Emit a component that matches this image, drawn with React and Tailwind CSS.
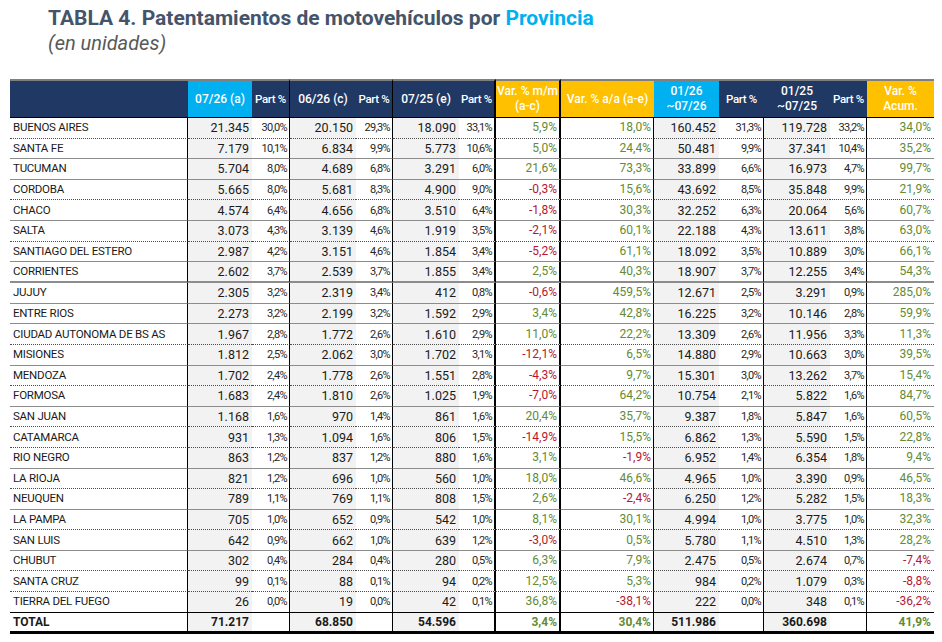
import React from 'react';

const cols = [
  { w: 'w-[178px]', type: 'name', cell: 'text-left pl-[3px] border-r border-r-black', head: 'bg-[#203864]' },
  { w: 'w-[64px]', type: 'num', cell: 'bg-[#f2f2f2] text-right pr-[3px]', head: 'bg-[#00b0f0]' },
  { w: 'w-[38px]', type: 'pct', cell: 'text-right pr-[2px] border-r border-r-black', head: 'bg-[#203864] border-r border-r-black' },
  { w: 'w-[66px]', type: 'num', cell: 'bg-[#f2f2f2] text-right pr-[3px]', head: 'bg-[#203864]' },
  { w: 'w-[37px]', type: 'pct', cell: 'text-right pr-[2px] border-r border-r-black', head: 'bg-[#203864] border-r border-r-black' },
  { w: 'w-[66px]', type: 'num', cell: 'bg-[#f2f2f2] text-right pr-[3px]', head: 'bg-[#203864]' },
  { w: 'w-[37px]', type: 'pct', cell: 'text-right pr-[2px] border-r-2 border-r-black', head: 'bg-[#203864] border-r-2 border-r-black' },
  { w: 'w-[65px]', type: 'var', cell: 'text-right pr-[2px] border-r-2 border-r-black', head: 'bg-[#ffc000] border-r-2 border-r-black' },
  { w: 'w-[93px]', type: 'var', cell: 'text-right pr-[2px] border-r border-r-black', head: 'bg-[#ffc000]' },
  { w: 'w-[65px]', type: 'num', cell: 'bg-[#f2f2f2] text-right pr-[3px]', head: 'bg-[#00b0f0]' },
  { w: 'w-[45px]', type: 'pct', cell: 'text-right pr-[2px] border-r border-r-black', head: 'bg-[#203864]' },
  { w: 'w-[66px]', type: 'num', cell: 'bg-[#f2f2f2] text-right pr-[3px]', head: 'bg-[#203864]' },
  { w: 'w-[37px]', type: 'pct', cell: 'text-right pr-[2px] border-r border-r-black', head: 'bg-[#203864]' },
  { w: 'w-[67px]', type: 'var', cell: 'text-right pr-[3px]', head: 'bg-[#ffc000]' },
];

const headers = [
  [''],
  ['07/26 (a)'],
  ['Part %'],
  ['06/26 (c)'],
  ['Part %'],
  ['07/25 (e)'],
  ['Part %'],
  ['Var. % m/m', '(a-c)'],
  ['Var. % a/a (a-e)'],
  ['01/26', '~07/26'],
  ['Part %'],
  ['01/25', '~07/25'],
  ['Part %'],
  ['Var. %', 'Acum.'],
];

// d = dotted, s = solid gris, t = solid grueso, k = negro
const rows = [
  ['BUENOS AIRES', '21.345', '30,0%', '20.150', '29,3%', '18.090', '33,1%', '5,9%', '18,0%', '160.452', '31,3%', '119.728', '33,2%', '34,0%', 'd'],
  ['SANTA FE', '7.179', '10,1%', '6.834', '9,9%', '5.773', '10,6%', '5,0%', '24,4%', '50.481', '9,9%', '37.341', '10,4%', '35,2%', 's'],
  ['TUCUMAN', '5.704', '8,0%', '4.689', '6,8%', '3.291', '6,0%', '21,6%', '73,3%', '33.899', '6,6%', '16.973', '4,7%', '99,7%', 's'],
  ['CORDOBA', '5.665', '8,0%', '5.681', '8,3%', '4.900', '9,0%', '-0,3%', '15,6%', '43.692', '8,5%', '35.848', '9,9%', '21,9%', 'd'],
  ['CHACO', '4.574', '6,4%', '4.656', '6,8%', '3.510', '6,4%', '-1,8%', '30,3%', '32.252', '6,3%', '20.064', '5,6%', '60,7%', 's'],
  ['SALTA', '3.073', '4,3%', '3.139', '4,6%', '1.919', '3,5%', '-2,1%', '60,1%', '22.188', '4,3%', '13.611', '3,8%', '63,0%', 'd'],
  ['SANTIAGO DEL ESTERO', '2.987', '4,2%', '3.151', '4,6%', '1.854', '3,4%', '-5,2%', '61,1%', '18.092', '3,5%', '10.889', '3,0%', '66,1%', 's'],
  ['CORRIENTES', '2.602', '3,7%', '2.539', '3,7%', '1.855', '3,4%', '2,5%', '40,3%', '18.907', '3,7%', '12.255', '3,4%', '54,3%', 't'],
  ['JUJUY', '2.305', '3,2%', '2.319', '3,4%', '412', '0,8%', '-0,6%', '459,5%', '12.671', '2,5%', '3.291', '0,9%', '285,0%', 's'],
  ['ENTRE RIOS', '2.273', '3,2%', '2.199', '3,2%', '1.592', '2,9%', '3,4%', '42,8%', '16.225', '3,2%', '10.146', '2,8%', '59,9%', 's'],
  ['CIUDAD AUTONOMA DE BS AS', '1.967', '2,8%', '1.772', '2,6%', '1.610', '2,9%', '11,0%', '22,2%', '13.309', '2,6%', '11.956', '3,3%', '11,3%', 'd'],
  ['MISIONES', '1.812', '2,5%', '2.062', '3,0%', '1.702', '3,1%', '-12,1%', '6,5%', '14.880', '2,9%', '10.663', '3,0%', '39,5%', 's'],
  ['MENDOZA', '1.702', '2,4%', '1.778', '2,6%', '1.551', '2,8%', '-4,3%', '9,7%', '15.301', '3,0%', '13.262', '3,7%', '15,4%', 'd'],
  ['FORMOSA', '1.683', '2,4%', '1.810', '2,6%', '1.025', '1,9%', '-7,0%', '64,2%', '10.754', '2,1%', '5.822', '1,6%', '84,7%', 's'],
  ['SAN JUAN', '1.168', '1,6%', '970', '1,4%', '861', '1,6%', '20,4%', '35,7%', '9.387', '1,8%', '5.847', '1,6%', '60,5%', 'd'],
  ['CATAMARCA', '931', '1,3%', '1.094', '1,6%', '806', '1,5%', '-14,9%', '15,5%', '6.862', '1,3%', '5.590', '1,5%', '22,8%', 'd'],
  ['RIO NEGRO', '863', '1,2%', '837', '1,2%', '880', '1,6%', '3,1%', '-1,9%', '6.952', '1,4%', '6.354', '1,8%', '9,4%', 's'],
  ['LA RIOJA', '821', '1,2%', '696', '1,0%', '560', '1,0%', '18,0%', '46,6%', '4.965', '1,0%', '3.390', '0,9%', '46,5%', 'd'],
  ['NEUQUEN', '789', '1,1%', '769', '1,1%', '808', '1,5%', '2,6%', '-2,4%', '6.250', '1,2%', '5.282', '1,5%', '18,3%', 's'],
  ['LA PAMPA', '705', '1,0%', '652', '0,9%', '542', '1,0%', '8,1%', '30,1%', '4.994', '1,0%', '3.775', '1,0%', '32,3%', 'd'],
  ['SAN LUIS', '642', '0,9%', '662', '1,0%', '639', '1,2%', '-3,0%', '0,5%', '5.780', '1,1%', '4.510', '1,3%', '28,2%', 's'],
  ['CHUBUT', '302', '0,4%', '284', '0,4%', '280', '0,5%', '6,3%', '7,9%', '2.475', '0,5%', '2.674', '0,7%', '-7,4%', 'd'],
  ['SANTA CRUZ', '99', '0,1%', '88', '0,1%', '94', '0,2%', '12,5%', '5,3%', '984', '0,2%', '1.079', '0,3%', '-8,8%', 'd'],
  ['TIERRA DEL FUEGO', '26', '0,0%', '19', '0,0%', '42', '0,1%', '36,8%', '-38,1%', '222', '0,0%', '348', '0,1%', '-36,2%', 'k'],
];

const total = ['TOTAL', '71.217', '', '68.850', '', '54.596', '', '3,4%', '30,4%', '511.986', '', '360.698', '', '41,9%'];

const bottomBorder = {
  d: 'border-b border-b-[#4d4d4d] [border-bottom-style:dotted]',
  s: 'border-b border-b-[#8c8c8c]',
  t: 'border-b-2 border-b-[#8c8c8c]',
  k: 'border-b border-b-black',
};

const textFor = (type, value) => {
  if (type === 'name') return 'text-[11.5px] tracking-[-0.02em] text-[#1a1a1a]';
  if (type === 'num') return 'text-[12.5px] text-[#1a1a1a]';
  if (type === 'pct') return 'text-[11px] text-[#262626] tracking-[-0.06em]';
  return value.startsWith('-') ? 'text-[12px] text-[#b5172f]' : 'text-[12px] text-[#648a35]';
};

const App = () => {
  return (
    <div className="w-[942px] h-[642px] bg-white overflow-hidden font-['Roboto','Liberation_Sans',sans-serif]">
      {/* Titulo */}
      <div className="pl-[48px] pt-[5px]">
        <h1 className="text-[21px] leading-[26px] font-bold text-[#44546a]">
          TABLA 4. Patentamientos de motovehículos por <span className="text-[#00b0f0]">Provincia</span>
        </h1>
        <p className="text-[20px] leading-[24px] italic text-[#595959]">(en unidades)</p>
      </div>

      {/* Tabla */}
      <div className="pl-[10px] mt-[24px]">
        <table className="table-fixed w-[924px] border-separate border-spacing-0">
          <colgroup>
            {cols.map((c, i) => (
              <col key={i} className={c.w} />
            ))}
          </colgroup>
          <thead>
            <tr>
              {cols.map((c, i) => (
                <th
                  key={i}
                  className={`h-[39px] p-0 border-t-2 border-t-[#7f7f7f] border-b border-b-black text-center text-white font-medium ${c.head} ${
                    c.type === 'pct' ? 'text-[11.5px] tracking-[-0.03em]' : 'text-[12px]'
                  } leading-[15px]`}
                >
                  {headers[i].map((line, j) => (
                    <div key={j}>{line}</div>
                  ))}
                </th>
              ))}
            </tr>
          </thead>
          <tbody>
            {rows.map((r) => (
              <tr key={r[0]}>
                {cols.map((c, i) => (
                  <td
                    key={i}
                    className={`h-[20.6px] py-0 leading-[19px] whitespace-nowrap ${c.cell} ${bottomBorder[r[14]]} ${textFor(c.type, r[i])}`}
                  >
                    {r[i]}
                  </td>
                ))}
              </tr>
            ))}
            <tr>
              {cols.map((c, i) => (
                <td
                  key={i}
                  className={`h-[21px] py-0 leading-[18px] whitespace-nowrap font-bold border-b-[3px] border-b-black ${c.cell} ${
                    c.type === 'var' ? 'text-[12px] text-[#648a35]' : 'text-[12px] text-[#1a1a1a]'
                  }`}
                >
                  {total[i]}
                </td>
              ))}
            </tr>
          </tbody>
        </table>
      </div>
    </div>
  );
};

export default App;
